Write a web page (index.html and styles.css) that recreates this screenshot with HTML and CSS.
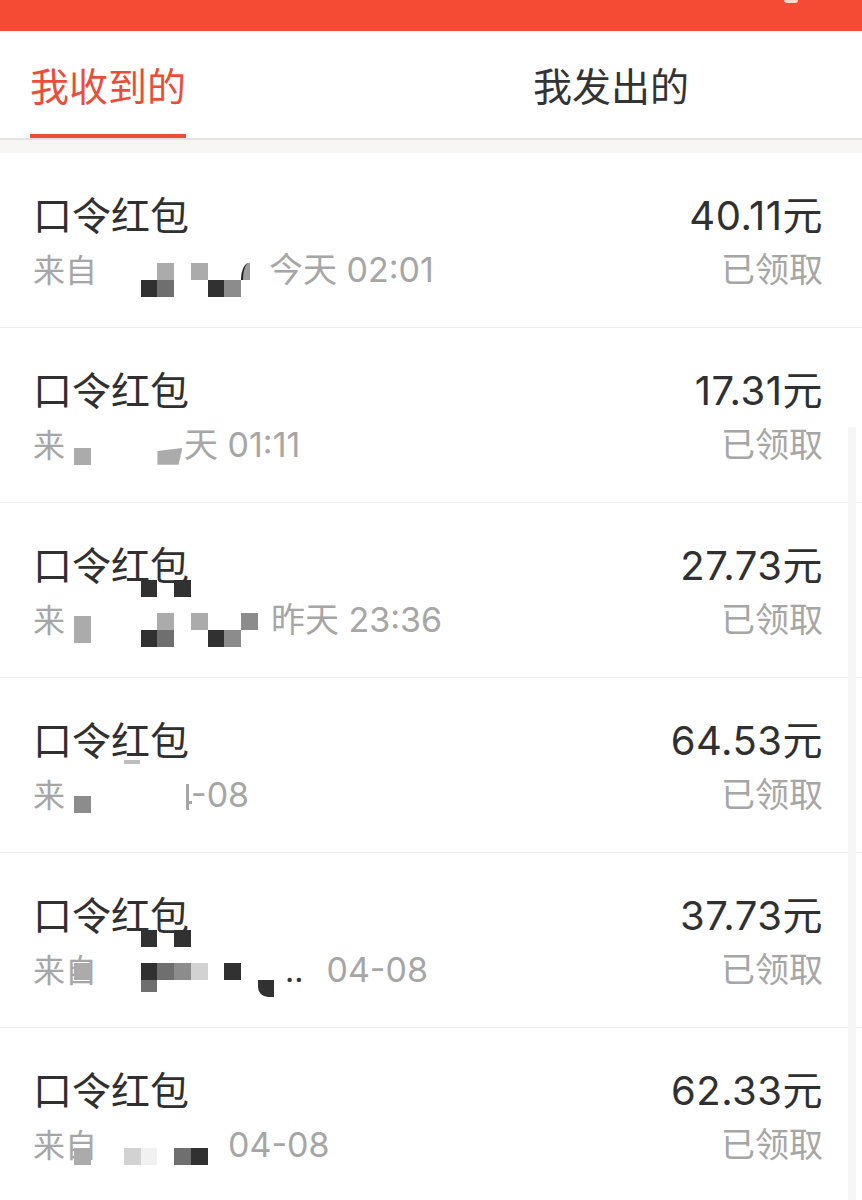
FILE: index.html
```html
<!DOCTYPE html>
<html lang="zh-CN">
<head>
    <meta charset="UTF-8">
    <meta name="viewport" content="width=device-width, initial-scale=1.0">
    <title>口令红包记录</title>
    <link rel="stylesheet" href="styles.css">
</head>
<body>

<div class="topbar">
    <span class="topbar-mark"></span>
</div>

<div class="tabs">
    <div class="tab active">我收到的</div>
    <div class="tab">我发出的</div>
</div>
<div class="tabs-shadow"></div>

<ul class="list">
    <li class="item">
        <div class="info">
            <div class="title">口令红包</div>
            <div class="sub"><span>来自</span><span class="when w1">今天 02:01</span></div>
        </div>
        <div class="side">
            <div class="amount">40.11元</div>
            <div class="state">已领取</div>
        </div>
        <!-- 打码 -->
        <div class="mosaic odd">
            <i class="l c5 r2"></i><i class="l c7 r2"></i><i class="arc c10 r2"></i>
            <i class="k c4 r3"></i><i class="g c5 r3"></i><i class="k c8 r3"></i><i class="g2 c9 r3"></i>
        </div>
    </li>

    <li class="item">
        <div class="info">
            <div class="title">口令红包</div>
            <div class="sub"><span>来</span><span class="when w2">天 01:11</span></div>
        </div>
        <div class="side">
            <div class="amount">17.31元</div>
            <div class="state">已领取</div>
        </div>
        <div class="mosaic even">
            <i class="l c0 r0"></i><i class="l wedge r0"></i>
        </div>
    </li>

    <li class="item">
        <div class="info">
            <div class="title">口令红包</div>
            <div class="sub"><span>来</span><span class="when w3">昨天 23:36</span></div>
        </div>
        <div class="side">
            <div class="amount">27.73元</div>
            <div class="state">已领取</div>
        </div>
        <div class="mosaic odd">
            <i class="k c4 r0"></i><i class="k c6 r0"></i>
            <i class="l tall c0"></i><i class="l c5 r2"></i><i class="l c7 r2"></i><i class="g2 c10 r2"></i>
            <i class="k c4 r3"></i><i class="g c5 r3"></i><i class="k c8 r3"></i><i class="g2 c9 r3"></i>
        </div>
    </li>

    <li class="item">
        <div class="info">
            <div class="title">口令红包</div>
            <div class="sub"><span>来</span><span class="when w4">-08</span></div>
        </div>
        <div class="side">
            <div class="amount">64.53元</div>
            <div class="state">已领取</div>
        </div>
        <div class="dash"></div>
        <div class="stub"></div>
        <div class="mosaic even low">
            <i class="g2 c0 r0"></i>
        </div>
    </li>

    <li class="item">
        <div class="info">
            <div class="title">口令红包</div>
            <div class="sub"><span>来自</span><span class="dots w5">..</span><span class="when w5b">04-08</span></div>
        </div>
        <div class="side">
            <div class="amount">37.73元</div>
            <div class="state">已领取</div>
        </div>
        <div class="mosaic odd">
            <i class="k c4 r0"></i><i class="k c6 r0"></i>
            <i class="l c0 r2"></i><i class="k c4 r2"></i><i class="g c5 r2"></i><i class="g2 c6 r2"></i><i class="xl c7 r2"></i><i class="k c9 r2"></i>
            <i class="g short c4 r3"></i><i class="k curve c11 r3"></i>
        </div>
    </li>

    <li class="item">
        <div class="info">
            <div class="title">口令红包</div>
            <div class="sub"><span>来自</span><span class="when w6">04-08</span></div>
        </div>
        <div class="side">
            <div class="amount">62.33元</div>
            <div class="state">已领取</div>
        </div>
        <div class="mosaic even">
            <i class="l c0 r0"></i><i class="xl c3 r0"></i><i class="faint c4 r0"></i><i class="g c6 r0"></i><i class="k c7 r0"></i>
        </div>
    </li>

    <div class="scroll-track"></div>
</ul>

</body>
</html>
```

FILE: styles.css
```css
body {
    margin: 0;
    background-color: #ffffff;
    font-family: Inter, "Noto Sans CJK SC", sans-serif;
    color: #333333;
    overflow: hidden;
}

.topbar {
    height: 31px;
    background-color: #f54b34;
    display: flex;
    justify-content: flex-end;
    padding-right: 64px;
}

.topbar-mark {
    width: 14px;
    height: 3px;
    background-color: #fbd4cc;
    border-radius: 0 0 7px 7px;
}

.tabs {
    display: flex;
    gap: 347px;
    padding-left: 30px;
    border-bottom: 2px solid #e6e2df;
}

.tab {
    padding-top: 34px;
    padding-bottom: 25px;
    font-size: 39px;
    line-height: 44px;
    color: #333333;
    border-bottom: 4px solid transparent;
}

.tab.active {
    color: #e94e3b;
    border-bottom-color: #ef4d37;
}

.tabs-shadow {
    height: 13px;
    background-color: #f8f6f4;
}

.list {
    list-style: none;
    margin: 0;
    padding: 0;
    position: relative;
}

.item {
    position: relative;
    display: flex;
    justify-content: space-between;
    padding: 41px 39px 37px 33px;
    border-bottom: 1px solid #eeeeee;
}

.title, .amount {
    font-size: 39px;
    line-height: 44px;
    color: #303030;
}

.amount {
    font-size: 40px;
    letter-spacing: 0.5px;
}

.sub, .state {
    margin-top: 12px;
    font-size: 32px;
    line-height: 40px;
    color: #a6a6a6;
}

.state {
    font-size: 34px;
}

.sub {
    display: flex;
    align-items: baseline;
    height: 40px;
}

.when {
    font-size: 34px;
}

.side {
    text-align: right;
}

/* positions of what is left of the erased text */
.w1 { margin-left: 172px; }
.w2 { margin-left: 119px; }
.w3 { margin-left: 206px; }
.w4 { margin-left: 126px; }
.w5 { margin-left: 188px; }
.w5b { margin-left: 23px; }
.w6 { margin-left: 131px; }

.dots {
    color: #333333;
}

/* mosaic over the names */
.mosaic {
    position: absolute;
    left: 74px;
    display: grid;
    grid-template-columns: repeat(12, 16.7px);
    grid-template-rows: repeat(4, 16.7px);
}

.mosaic.odd { top: 77px; }
.mosaic.even { top: 120px; grid-template-rows: 16.7px; }
.mosaic.even.low { top: 118px; }

.mosaic i { display: block; }

.mosaic .k { background-color: #313131; }
.mosaic .g { background-color: #6f6f6f; }
.mosaic .g2 { background-color: #8c8c8c; }
.mosaic .l { background-color: #ababab; }
.mosaic .xl { background-color: #d2d2d2; }
.mosaic .faint { background-color: #f1f1f1; }

.mosaic .tall { grid-row: 3 / span 2; margin-top: 3px; height: 27px; }
.mosaic .short { height: 12px; }
.mosaic .curve { border-bottom-left-radius: 10px; }

.mosaic .wedge {
    grid-column: 6 / span 2;
    width: 25px;
    clip-path: polygon(0 18%, 100% 0, 84% 100%, 0 100%);
}

.mosaic .arc {
    width: 7px;
    background-color: #9c9c9c;
    border-left: 2px solid #222222;
    border-top-left-radius: 8px 16px;
}

.c0 { grid-column: 1; }
.c3 { grid-column: 4; }
.c4 { grid-column: 5; }
.c5 { grid-column: 6; }
.c6 { grid-column: 7; }
.c7 { grid-column: 8; }
.c8 { grid-column: 9; }
.c9 { grid-column: 10; }
.c10 { grid-column: 11; }
.c11 { grid-column: 12; }

.r0 { grid-row: 1; }
.r2 { grid-row: 3; }
.r3 { grid-row: 4; }

.dash {
    position: absolute;
    left: 124px;
    top: 82px;
    width: 16px;
    height: 4px;
    background-color: #bdbdbd;
}

/* the last stroke of an erased "4" */
.stub {
    position: absolute;
    left: 186px;
    top: 106px;
    width: 3px;
    height: 26px;
    background-color: #a6a6a6;
}

.stub::after {
    content: "";
    position: absolute;
    left: 3px;
    top: 17px;
    width: 3px;
    height: 3px;
    background-color: #a6a6a6;
}

.scroll-track {
    position: absolute;
    top: 274px;
    right: 6px;
    bottom: 0;
    width: 8px;
    background-color: #f6f6f6;
}
```
